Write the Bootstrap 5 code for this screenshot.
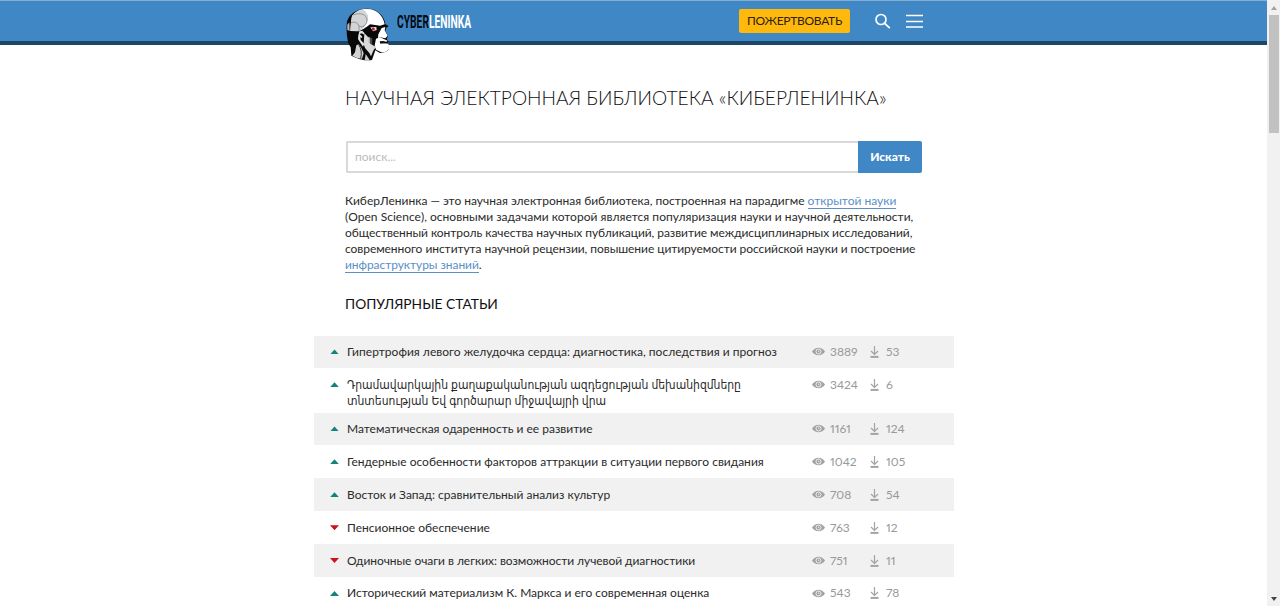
<!DOCTYPE html>
<html lang="ru">
<head>
<meta charset="utf-8">
<meta name="viewport" content="width=device-width, initial-scale=1">
<title>КиберЛенинка</title>
<link href="https://cdn.jsdelivr.net/npm/bootstrap@5.3.0/dist/css/bootstrap.min.css" rel="stylesheet">
<style>
body{height:606px;overflow:hidden;font-family:Lato,"DejaVu Sans Condensed","DejaVu Sans",sans-serif;font-size:12px;line-height:16px;color:#2a2a2a}
.page-pane{min-width:0;height:606px;overflow:hidden}
.topbar{height:45px;background:#4087c5;border-top:1px solid #86aed2;border-bottom:4px solid #1c4566}
.wrap{width:576px;margin-left:346px}
.head-logo{width:43px;height:53px;margin-top:7px;flex:none}
.brand-name{font-family:Roboto,sans-serif;font-weight:700;font-size:19px;line-height:20px;transform:scaleX(.54);transform-origin:0 50%;color:#fff;margin:11px 0 0 8px;width:74px;white-space:nowrap}
.brand-name span{color:#050a10}
.donate{width:111px;height:24px;margin-top:8px;background:#ffb80c;color:#2c2110;border-radius:2px;font-size:12px;letter-spacing:-.3px;line-height:24px;padding:0;border:0}
.tool{margin-top:12px}
.tool-find{margin-left:25px}
.tool-menu{margin:12px -1px 0 15px}
.title{font-weight:300;font-size:19.2px;line-height:24px;margin:41px 0 31px -1px;color:#111}
.search{height:32px}
.search .form-control{height:32px;border:2px solid #d9d9d9;border-right:0;border-radius:2px 0 0 2px;font-size:12px;padding:0 7px 1px}
.search .form-control::placeholder{color:#bbb}
.search .btn{width:64px;background:#4087c5;color:#fff;font-weight:900;font-size:12px;border-radius:0 2px 2px 0;padding:0}
.about{margin:20px 0 0 -1px;white-space:nowrap}
.about a{color:#5b8fc7;text-decoration:none;border-bottom:1px solid #5b8fc7}
.tight{letter-spacing:-.055px}
.loose{letter-spacing:.025px}
.sub{font-size:13.8px;line-height:18px;font-weight:400;margin:22px 0 22.500px -1px;color:#111}
.items{width:640px;margin-left:314px}
.item{height:32.9px;padding-top:8.4px}
.item:nth-child(odd){background:#f1f1f1}
.item.two{height:44.2px}
.mark-dir{width:9px;height:5px;margin:5.500px 8px 0 16px;flex:none;background:#14837a;clip-path:polygon(50% 0,100% 100%,0 100%)}
.mark-dir.down{background:#c8141a;clip-path:polygon(0 0,100% 0,50% 100%)}
.name{width:465px;white-space:nowrap}
.stat{color:#999;font-variant-numeric:proportional-nums}
.views{width:58px}
.views svg{margin-right:5px}
.loads svg{margin-right:7px}
.scroll{width:13px;height:606px;background:#f1f1f1;flex:none;padding:6px 0 5px}
.thumb{width:10px;height:118px;background:#c1c1c1;margin-top:5px}
</style>
</head>
<body>
<svg class="d-none">
<symbol id="eye" viewBox="0 0 13 9"><path d="M0 4.500C3-.6 10-.6 13 4.500C10 9.600 3 9.600 0 4.500Z" fill="#a2a2a2"/><circle cx="6.500" cy="4.500" r="2.500" fill="none" stroke="#f7f7f7" stroke-width=".9"/><path d="M6.500 3.500v1.200h1" fill="none" stroke="#f7f7f7" stroke-width=".7"/></symbol>
<symbol id="load" viewBox="0 0 9 12"><path d="M4.500 0v8M1 5l3.500 3.500L8 5" fill="none" stroke="#a3a3a3" stroke-width="1.200"/><path d="M.5 9.900h8v2h-8z" fill="#a3a3a3"/></symbol>
</svg>
<div class="d-flex">
<main class="page-pane flex-grow-1">
<header class="topbar">
<div class="wrap d-flex align-items-start">
<svg class="head-logo" viewBox="18 12 129 159">
<path d="M20 62C20 35 45 14 82 14C112 14 134 36 136 61L146 66L139 71L136 80L144 96L140 105L145 111L142 119L147 134Q142 145 120 147L106 139L96 168Q70 173 34 155L32 130Q18 112 20 62Z" fill="#080808"/>
<path d="M36 36C48 18 68 14 84 15C109 16 129 33 134 61L120 65L90 61L81 68L70 75L55 82L31 81L33 55Z" fill="#fff"/>
<path d="M36 36C48 20 60 18 72 19Q87 30 84 49Q81 62 71 69L64 78L57 81L31 80L33 55Z" fill="#d3d4d6"/>
<path d="M39 33Q66 23 78 38Q87 57 68 69M33 56Q50 50 57 66L57 81M57 66Q67 72 73 66" fill="none" stroke="#77797c" stroke-width="2"/>
<path d="M22 62L28 55L29 81L22 78Z" fill="#b7b8ba"/>
<path d="M58 82L67 80L73 87L71 92L66 88L59 90L67 98L66 102L61 100L62 108L73 119L69 128L61 116L54 105L55 94Z" fill="#e3e4e5"/>
<path d="M73 87L84 99L91 101L91 119L108 129L101 138L93 157L88 147L75 132L71 120Z" fill="#d9dadc"/>
<path d="M88 98V117M95 102V122" stroke="#888" stroke-width="2"/>
<path d="M49 124L56 121L64 131L71 148L66 164Q48 163 37 155L45 145Z" fill="#d1d2d4"/>
<path d="M56 122Q68 139 62 163" fill="none" stroke="#333" stroke-width="3"/>
<path d="M77 150L89 168L74 169Z" fill="#cacbcd"/>
<path d="M74 73L88 65L119 66L124 74L117 87L98 98L85 94Z" fill="#080808"/>
<path d="M91 70L109 69L110 78L99 82Z" fill="#eed6db"/><circle cx="100" cy="75" r="4.500" fill="#ca1930"/>
<path d="M125 72L136 69L134 79L143 95L136 103L120 100L114 103L115 91Z" fill="#fff"/>
<path d="M108 104L120 100L143 110L139 113L127 111L121 116L145 119L147 134Q142 145 124 145L108 137L104 124Z" fill="#fff"/>
<path d="M119 111L135 113L140 117L121 119Z" fill="#111"/>
</svg>
<div class="brand-name"><span>CYBER</span>LENINKA</div>
<button class="btn donate ms-auto">ПОЖЕРТВОВАТЬ</button>
<svg class="tool tool-find" width="16" height="16" viewBox="0 0 16 16" fill="none" stroke="#fff" stroke-width="1.700"><circle cx="6" cy="6.500" r="5"/><path d="M9.800 10.500l5 4.600"/></svg>
<svg class="tool-menu" width="17" height="16" viewBox="0 0 17 16" stroke="#fff" stroke-width="1.500"><path d="M0 2.500h17M0 8.500h17M0 14h17"/></svg>
</div>
</header>
<div class="wrap">
<h1 class="title text-nowrap">НАУЧНАЯ ЭЛЕКТРОННАЯ БИБЛИОТЕКА «КИБЕРЛЕНИНКА»</h1>
<form class="search input-group"><input class="form-control" placeholder="поиск..."><button type="button" class="btn">Искать</button></form>
<p class="about">КиберЛенинка — это научная электронная библиотека, построенная на парадигме <a href="#">открытой науки</a><br><span class="loose">(Open Science), основными задачами которой является популяризация науки и научной деятельности,</span><br><span class="tight">общественный контроль качества научных публикаций, развитие междисциплинарных исследований,<br>современного института научной рецензии, повышение цитируемости российской науки и построение<br><a href="#">инфраструктуры знаний</a>.</span></p>
<h2 class="sub">ПОПУЛЯРНЫЕ СТАТЬИ</h2>
</div>
<div class="items">
<div class="item d-flex align-items-start"><i class="mark-dir"></i><div class="name loose">Гипертрофия левого желудочка сердца: диагностика, последствия и прогноз</div><div class="stat views d-flex align-items-center"><svg width="13" height="9"><use href="#eye"/></svg>3889</div><div class="stat loads d-flex align-items-center"><svg width="9" height="12"><use href="#load"/></svg>53</div></div>
<div class="item two d-flex align-items-start"><i class="mark-dir"></i><div class="name">Դրամավարկային քաղաքականության ազդեցության մեխանիզմները<br>տնտեսության Եվ գործարար միջավայրի վրա</div><div class="stat views d-flex align-items-center"><svg width="13" height="9"><use href="#eye"/></svg>3424</div><div class="stat loads d-flex align-items-center"><svg width="9" height="12"><use href="#load"/></svg>6</div></div>
<div class="item d-flex align-items-start"><i class="mark-dir"></i><div class="name">Математическая одаренность и ее развитие</div><div class="stat views d-flex align-items-center"><svg width="13" height="9"><use href="#eye"/></svg>1161</div><div class="stat loads d-flex align-items-center"><svg width="9" height="12"><use href="#load"/></svg>124</div></div>
<div class="item d-flex align-items-start"><i class="mark-dir"></i><div class="name">Гендерные особенности факторов аттракции в ситуации первого свидания</div><div class="stat views d-flex align-items-center"><svg width="13" height="9"><use href="#eye"/></svg>1042</div><div class="stat loads d-flex align-items-center"><svg width="9" height="12"><use href="#load"/></svg>105</div></div>
<div class="item d-flex align-items-start"><i class="mark-dir"></i><div class="name">Восток и Запад: сравнительный анализ культур</div><div class="stat views d-flex align-items-center"><svg width="13" height="9"><use href="#eye"/></svg>708</div><div class="stat loads d-flex align-items-center"><svg width="9" height="12"><use href="#load"/></svg>54</div></div>
<div class="item d-flex align-items-start"><i class="mark-dir down"></i><div class="name loose">Пенсионное обеспечение</div><div class="stat views d-flex align-items-center"><svg width="13" height="9"><use href="#eye"/></svg>763</div><div class="stat loads d-flex align-items-center"><svg width="9" height="12"><use href="#load"/></svg>12</div></div>
<div class="item d-flex align-items-start"><i class="mark-dir down"></i><div class="name tight">Одиночные очаги в легких: возможности лучевой диагностики</div><div class="stat views d-flex align-items-center"><svg width="13" height="9"><use href="#eye"/></svg>751</div><div class="stat loads d-flex align-items-center"><svg width="9" height="12"><use href="#load"/></svg>11</div></div>
<div class="item d-flex align-items-start"><i class="mark-dir"></i><div class="name">Исторический материализм К. Маркса и его современная оценка</div><div class="stat views d-flex align-items-center"><svg width="13" height="9"><use href="#eye"/></svg>543</div><div class="stat loads d-flex align-items-center"><svg width="9" height="12"><use href="#load"/></svg>78</div></div>
</div>
</main>
<aside class="scroll d-flex flex-column align-items-center"><svg width="6" height="4"><path d="M0 4L3 0L6 4Z" fill="#a3a3a3"/></svg><div class="thumb"></div><svg class="mt-auto" width="6" height="4"><path d="M0 0H6L3 4Z" fill="#444"/></svg></aside>
</div>
</body>
</html>
